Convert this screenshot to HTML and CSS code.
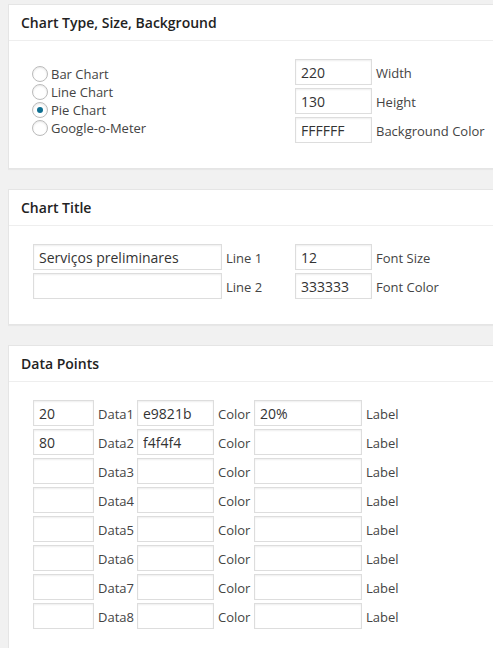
FILE: index.html
```html
<!DOCTYPE html>
<html lang="en">
<head>
<meta charset="utf-8">
<title>Chart settings</title>
<link rel="stylesheet" href="styles.css">
</head>
<body>
<div class="wrap">
  <div class="postbox">
    <h3 class="hndle">Chart Type, Size, Background</h3>
    <div class="inside grid-type">
      <div class="radios">
        <label class="radio-row"><input type="radio" name="type" class="radio"><span>Bar Chart</span></label>
        <label class="radio-row"><input type="radio" name="type" class="radio"><span>Line Chart</span></label>
        <label class="radio-row"><input type="radio" name="type" class="radio" checked><span>Pie Chart</span></label>
        <label class="radio-row"><input type="radio" name="type" class="radio"><span>Google-o-Meter</span></label>
      </div>
      <input class="field" type="text" value="220"><span class="lbl">Width</span>
      <input class="field" type="text" value="130"><span class="lbl">Height</span>
      <input class="field" type="text" value="FFFFFF"><span class="lbl">Background Color</span>
    </div>
  </div>

  <div class="postbox">
    <h3 class="hndle">Chart Title</h3>
    <div class="inside grid-title">
      <input class="field" type="text" value="Serviços preliminares"><span class="lbl">Line 1</span>
      <input class="field" type="text" value="12"><span class="lbl">Font Size</span>
      <input class="field" type="text" value=""><span class="lbl">Line 2</span>
      <input class="field" type="text" value="333333"><span class="lbl">Font Color</span>
    </div>
  </div>

  <div class="postbox last">
    <h3 class="hndle">Data Points</h3>
    <div class="inside grid-data">
      <input class="field" type="text" value="20"><span class="lbl">Data1</span><input class="field" type="text" value="e9821b"><span class="lbl">Color</span><input class="field" type="text" value="20%"><span class="lbl">Label</span>
      <input class="field" type="text" value="80"><span class="lbl">Data2</span><input class="field" type="text" value="f4f4f4"><span class="lbl">Color</span><input class="field" type="text" value=""><span class="lbl">Label</span>
      <input class="field" type="text" value=""><span class="lbl">Data3</span><input class="field" type="text" value=""><span class="lbl">Color</span><input class="field" type="text" value=""><span class="lbl">Label</span>
      <input class="field" type="text" value=""><span class="lbl">Data4</span><input class="field" type="text" value=""><span class="lbl">Color</span><input class="field" type="text" value=""><span class="lbl">Label</span>
      <input class="field" type="text" value=""><span class="lbl">Data5</span><input class="field" type="text" value=""><span class="lbl">Color</span><input class="field" type="text" value=""><span class="lbl">Label</span>
      <input class="field" type="text" value=""><span class="lbl">Data6</span><input class="field" type="text" value=""><span class="lbl">Color</span><input class="field" type="text" value=""><span class="lbl">Label</span>
      <input class="field" type="text" value=""><span class="lbl">Data7</span><input class="field" type="text" value=""><span class="lbl">Color</span><input class="field" type="text" value=""><span class="lbl">Label</span>
      <input class="field" type="text" value=""><span class="lbl">Data8</span><input class="field" type="text" value=""><span class="lbl">Color</span><input class="field" type="text" value=""><span class="lbl">Label</span>
    </div>
  </div>
</div>
</body>
</html>
```

FILE: styles.css
```css
html {
  overflow: hidden;
}
body {
  margin: 4px 0 0 8px;
  background: #f1f1f1;
  font-family: "Open Sans", "Liberation Sans", sans-serif;
  font-size: 13px;
  color: #444;
}
.wrap {
  width: 485px;
}
.postbox {
  background: #fff;
  border: 1px solid #e5e5e5;
  border-right: 0;
  box-shadow: 0 1px 1px rgba(0, 0, 0, 0.04);
  margin-bottom: 20px;
}
.postbox.last {
  margin-bottom: 0;
}
.hndle {
  margin: 0;
  height: 35px;
  line-height: 35px;
  padding: 0 12px;
  font-size: 14px;
  font-weight: 600;
  color: #222;
  border-bottom: 1px solid #eee;
}
.inside {
  padding: 18px 24px 25px 24px;
  display: grid;
  column-gap: 4px;
  row-gap: 3px;
  align-items: center;
  grid-auto-rows: 26px;
}
.grid-type {
  grid-template-columns: 258px 77px auto;
}
.grid-title {
  grid-template-columns: 189px 65px 77px auto;
}
.grid-data {
  grid-template-columns: 61px 35px 77px 32px 108px auto;
}
.radios {
  grid-row: 1 / span 3;
  align-self: center;
  display: flex;
  flex-direction: column;
}
.radio-row {
  display: flex;
  align-items: center;
  height: 18px;
  gap: 3px;
}
.radio {
  -webkit-appearance: none;
  appearance: none;
  margin: 0 0 0 -1px;
  width: 16px;
  height: 16px;
  border: 1px solid #bbb;
  border-radius: 50%;
  background: #fff;
  box-shadow: inset 0 1px 2px rgba(0, 0, 0, 0.1);
  display: flex;
  align-items: center;
  justify-content: center;
  box-sizing: border-box;
}
.radio:checked::before {
  content: "";
  width: 6px;
  height: 6px;
  border-radius: 50%;
  background: #0e6f91;
}
.field {
  box-sizing: border-box;
  width: 100%;
  height: 26px;
  margin: 0;
  padding: 0 5px;
  border: 1px solid #ddd;
  box-shadow: inset 0 1px 2px rgba(0, 0, 0, 0.07);
  background: #fff;
  color: #333;
  font-family: "Open Sans", "Liberation Sans", sans-serif;
  font-size: 14px;
  outline: none;
}
.lbl {
  white-space: nowrap;
  padding-top: 1px;
}
```
